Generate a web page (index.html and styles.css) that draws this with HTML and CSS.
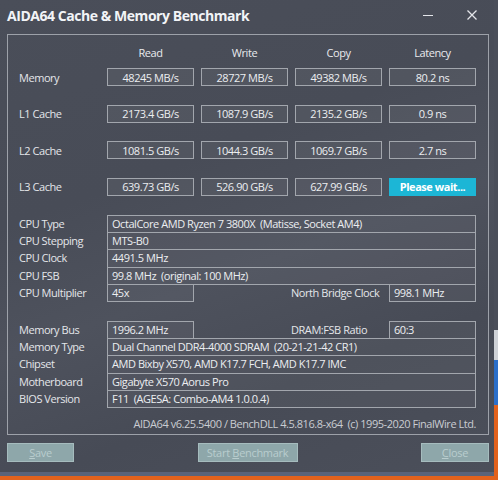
FILE: index.html
```html
<!DOCTYPE HTML>
<html>
  <head>
    <link rel="stylesheet" href="styles.css">
  </head>
  <body>
    <div class="screen">
      <div class="window">
        <div class="titlebar">
          <span class="title">AIDA64 Cache &amp; Memory Benchmark</span>
          <span class="controls">
            <svg class="min" width="12" height="12" viewBox="0 0 12 12"><line x1="1" y1="6.5" x2="11" y2="6.5" stroke="#e4e6ea" stroke-width="1"/></svg>
            <svg class="close" width="12" height="12" viewBox="0 0 12 12"><path d="M1.5 1.5 L10.5 10.5 M10.5 1.5 L1.5 10.5" stroke="#e4e6ea" stroke-width="1.3"/></svg>
          </span>
        </div>

        <div class="group">
          <div class="heads">
            <span></span>
            <span>Read</span>
            <span>Write</span>
            <span>Copy</span>
            <span>Latency</span>
          </div>

          <div class="bench">
            <span class="label">Memory</span>
            <span class="val">48245 MB/s</span>
            <span class="val">28727 MB/s</span>
            <span class="val">49382 MB/s</span>
            <span class="val">80.2 ns</span>

            <span class="label">L1 Cache</span>
            <span class="val">2173.4 GB/s</span>
            <span class="val">1087.9 GB/s</span>
            <span class="val">2135.2 GB/s</span>
            <span class="val">0.9 ns</span>

            <span class="label">L2 Cache</span>
            <span class="val">1081.5 GB/s</span>
            <span class="val">1044.3 GB/s</span>
            <span class="val">1069.7 GB/s</span>
            <span class="val">2.7 ns</span>

            <span class="label">L3 Cache</span>
            <span class="val">639.73 GB/s</span>
            <span class="val">526.90 GB/s</span>
            <span class="val">627.99 GB/s</span>
            <span class="val busy">Please wait...</span>
          </div>

          <div class="info cpu">
            <div class="row">
              <span class="name">CPU Type</span>
              <span class="field wide">OctalCore AMD Ryzen 7 3800X&nbsp; (Matisse, Socket AM4)</span>
            </div>
            <div class="row">
              <span class="name">CPU Stepping</span>
              <span class="field wide">MTS-B0</span>
            </div>
            <div class="row">
              <span class="name">CPU Clock</span>
              <span class="field wide">4491.5 MHz</span>
            </div>
            <div class="row">
              <span class="name">CPU FSB</span>
              <span class="field wide">99.8 MHz&nbsp; (original: 100 MHz)</span>
            </div>
            <div class="row">
              <span class="name">CPU Multiplier</span>
              <span class="field">45x</span>
              <span class="name side">North Bridge Clock</span>
              <span class="field">998.1 MHz</span>
            </div>
          </div>

          <div class="info mem">
            <div class="row">
              <span class="name">Memory Bus</span>
              <span class="field">1996.2 MHz</span>
              <span class="name side">DRAM:FSB Ratio</span>
              <span class="field">60:3</span>
            </div>
            <div class="row">
              <span class="name">Memory Type</span>
              <span class="field wide">Dual Channel DDR4-4000 SDRAM&nbsp; (20-21-21-42 CR1)</span>
            </div>
            <div class="row">
              <span class="name">Chipset</span>
              <span class="field wide">AMD Bixby X570, AMD K17.7 FCH, AMD K17.7 IMC</span>
            </div>
            <div class="row">
              <span class="name">Motherboard</span>
              <span class="field wide">Gigabyte X570 Aorus Pro</span>
            </div>
            <div class="row">
              <span class="name">BIOS Version</span>
              <span class="field wide">F11&nbsp; (AGESA: Combo-AM4 1.0.0.4)</span>
            </div>
          </div>

          <p class="version">AIDA64 v6.25.5400 / BenchDLL 4.5.816.8-x64&nbsp; (c) 1995-2020 FinalWire Ltd.</p>
        </div>

        <div class="buttons">
          <button class="btn save"><u>S</u>ave</button>
          <button class="btn start">Start <u>B</u>enchmark</button>
          <button class="btn close-btn"><u>C</u>lose</button>
        </div>
      </div>

      <div class="side">
        <div class="side_dark"></div>
        <div class="side_light"></div>
        <div class="side_blue"></div>
      </div>
    </div>
    <div class="taskbar"></div>
  </body>
</html>
```

FILE: styles.css
```css
* {
  box-sizing: border-box;
}

body {
  margin: 0;
  background-color: #e2621d;
  font-family: "Open Sans", "Noto Sans", sans-serif;
  width: 498px;
  height: 480px;
  overflow: hidden;
}

.screen {
  display: flex;
  height: 472px;
}

.window {
  width: 494px;
  height: 472px;
  background: linear-gradient(160deg, #4a4e59 0%, #484c57 35%, #4e525d 55%, #474b56 75%, #4b4f5a 100%);
  color: #e6e8ec;
}

.side {
  width: 4px;
  display: flex;
  flex-direction: column;
}
.side_dark { height: 330px; background-color: #4a4e59; }
.side_light { height: 30px; background-color: #cfd2d7; }
.side_blue { height: 45px; background-color: #2b6fca; }

.taskbar {
  width: 494px;
  height: 4px;
  background-color: #5a6379;
}

/* title bar */
.titlebar {
  height: 34px;
  display: flex;
  align-items: center;
  padding: 0 16px 4px 7px;
}

.title {
  font-size: 14px;
  font-weight: bold;
  letter-spacing: -0.45px;
  color: #f2f4f7;
  flex: 1;
}

.controls {
  display: flex;
  align-items: center;
}
.controls .min { margin-right: 32px; }

/* group box */
.group {
  margin: 0 5px 0 7px;
  height: 401px;
  border: 1px solid #9da1a9;
  padding: 10px 0 0 11px;
  font-size: 11px;
  letter-spacing: -0.45px;
}

.heads,
.bench {
  display: grid;
  grid-template-columns: 81px repeat(4, 87px);
  column-gap: 7px;
}

.heads {
  height: 16px;
  line-height: 16px;
  margin-bottom: 7px;
  text-align: center;
  color: #e8eaee;
}

.bench {
  grid-auto-rows: 18px;
  row-gap: 18.5px;
}

.label {
  display: flex;
  align-items: center;
  color: #e4e6ea;
  white-space: nowrap;
}

.val {
  border: 1px solid #a2a6ad;
  background-color: rgba(255, 255, 255, 0.05);
  display: flex;
  align-items: center;
  justify-content: center;
  color: #eceef1;
}

.val.busy {
  background-color: #1cb6d6;
  border-color: #1cb6d6;
  color: #ffffff;
  font-weight: bold;
}

/* info rows */
.cpu { margin-top: 19px; }
.mem { margin-top: 18.5px; }

.row {
  display: flex;
  height: 18.35px;
  margin-top: -1px;
}
.row:first-child { margin-top: 0; }

.name {
  width: 88px;
  flex-shrink: 0;
  line-height: 18px;
  color: #e4e6ea;
  white-space: nowrap;
  text-align: left;
}

.name.side {
  width: 195px;
  padding-left: 97px;
}

.field {
  width: 87px;
  flex-shrink: 0;
  border: 1px solid #a2a6ad;
  background-color: rgba(255, 255, 255, 0.04);
  line-height: 16px;
  padding-left: 4px;
  color: #eceef1;
  white-space: nowrap;
}

.field.wide { width: 369px; }

.version {
  margin: 8px 12px 0 0;
  text-align: right;
  color: #c9ccd2;
  white-space: nowrap;
}

/* buttons */
.buttons {
  display: flex;
  justify-content: space-between;
  padding: 8px 5px 0 7px;
}

.btn {
  height: 19px;
  background-color: #8ea7aa;
  border: 1px solid #a6bcbe;
  color: #b9cdce;
  font-family: "Open Sans", "Noto Sans", sans-serif;
  font-size: 11px;
  letter-spacing: -0.3px;
  padding: 0;
}
.save { width: 67px; }
.start { width: 100px; }
.close-btn { width: 68px; }
```
